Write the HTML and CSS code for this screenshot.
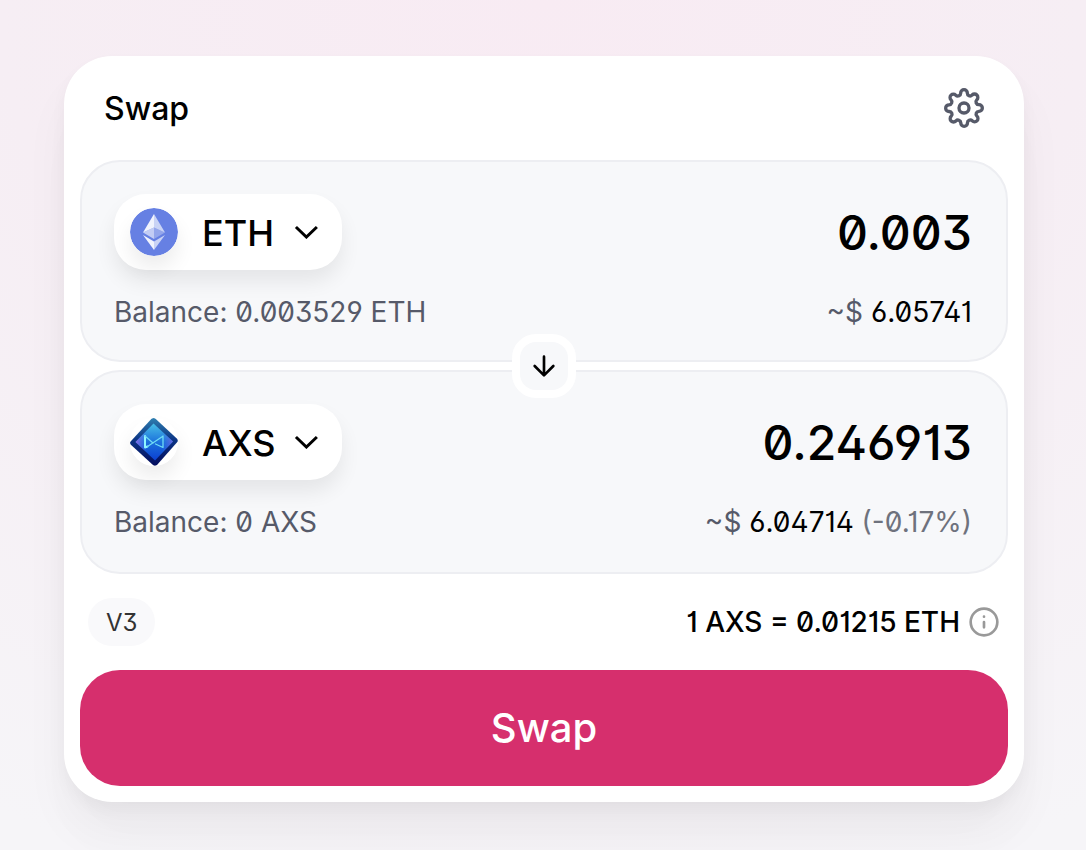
FILE: index.html
```html
<!DOCTYPE html>
<html lang="en">
<head>
    <meta charset="UTF-8">
    <meta name="viewport" content="width=device-width, initial-scale=1.0">
    <title>Swap</title>
    <link rel="stylesheet" href="styles.css">
</head>
<body>
    <main class="swap-card">
        <header class="swap-header">
            <h1 class="swap-title">Swap</h1>
            <button class="settings-button" type="button" aria-label="Transaction settings">
                <svg width="40" height="40" viewBox="0 0 24 24" fill="none" stroke="currentColor" stroke-width="2" stroke-linecap="round" stroke-linejoin="round">
                    <circle cx="12" cy="12" r="3"/>
                    <path d="M19.4 15a1.65 1.65 0 0 0 .33 1.82l.06.06a2 2 0 0 1 0 2.83 2 2 0 0 1-2.83 0l-.06-.06a1.65 1.65 0 0 0-1.82-.33 1.65 1.65 0 0 0-1 1.51V21a2 2 0 0 1-2 2 2 2 0 0 1-2-2v-.09A1.65 1.65 0 0 0 9 19.4a1.65 1.65 0 0 0-1.82.33l-.06.06a2 2 0 0 1-2.83 0 2 2 0 0 1 0-2.83l.06-.06a1.65 1.65 0 0 0 .33-1.82 1.65 1.65 0 0 0-1.51-1H3a2 2 0 0 1-2-2 2 2 0 0 1 2-2h.09A1.65 1.65 0 0 0 4.6 9a1.65 1.65 0 0 0-.33-1.82l-.06-.06a2 2 0 0 1 0-2.83 2 2 0 0 1 2.83 0l.06.06a1.65 1.65 0 0 0 1.82.33H9a1.65 1.65 0 0 0 1-1.51V3a2 2 0 0 1 2-2 2 2 0 0 1 2 2v.09a1.65 1.65 0 0 0 1 1.51 1.65 1.65 0 0 0 1.82-.33l.06-.06a2 2 0 0 1 2.83 0 2 2 0 0 1 0 2.83l-.06.06a1.65 1.65 0 0 0-.33 1.82V9a1.65 1.65 0 0 0 1.51 1H21a2 2 0 0 1 2 2 2 2 0 0 1-2 2h-.09a1.65 1.65 0 0 0-1.51 1z"/>
                </svg>
            </button>
        </header>

        <section class="currency-panel" aria-label="From">
            <div class="currency-row">
                <button class="token-button" type="button">
                    <svg class="token-logo" width="48" height="48" viewBox="0 0 48 48">
                        <circle cx="24" cy="24" r="24" fill="#6680e3"/>
                        <path fill="#fff" fill-opacity=".9" d="M24 6L13 24.5l11-5z"/>
                        <path fill="#fff" fill-opacity=".65" d="M24 6l11 18.5-11-5z"/>
                        <path fill="#fff" fill-opacity=".6" d="M13 24.5l11-5V31z"/>
                        <path fill="#fff" fill-opacity=".3" d="M35 24.5l-11-5V31z"/>
                        <path fill="#fff" fill-opacity=".9" d="M13 27l11 6.500V42z"/>
                        <path fill="#fff" fill-opacity=".65" d="M35 27l-11 6.500V42z"/>
                    </svg>
                    <span class="token-symbol">ETH</span>
                    <svg class="chevron" width="24" height="14" viewBox="0 0 12 7" fill="none" stroke="currentColor" stroke-width="1.5">
                        <path d="M.97 1L6.2 6l5.24-5"/>
                    </svg>
                </button>
                <input class="amount" type="text" inputmode="decimal" aria-label="Amount to sell" value="0.003">
            </div>
            <div class="currency-row currency-details">
                <span class="muted">Balance: 0.003529 ETH</span>
                <span><span class="muted">~$</span> 6.05741</span>
            </div>
        </section>

        <div class="switch-row">
            <button class="switch-button" type="button" aria-label="Switch tokens">
                <svg width="32" height="32" viewBox="0 0 24 24" fill="none" stroke="currentColor" stroke-width="2" stroke-linecap="round" stroke-linejoin="round">
                    <path d="M12 5v14M19 12l-7 7-7-7"/>
                </svg>
            </button>
        </div>

        <section class="currency-panel currency-panel-output" aria-label="To">
            <div class="currency-row">
                <button class="token-button" type="button">
                    <svg class="token-logo" width="48" height="48" viewBox="0 0 48 48">
                        <defs>
                            <linearGradient id="axs-edge" x1="0" y1="0" x2="0" y2="1">
                                <stop offset="0" stop-color="#2f7fb0"/>
                                <stop offset=".45" stop-color="#0c3585"/>
                                <stop offset="1" stop-color="#020b5c"/>
                            </linearGradient>
                            <linearGradient id="axs-face" x1="0" y1="0" x2="0" y2="1">
                                <stop offset="0" stop-color="#48bfe6"/>
                                <stop offset=".5" stop-color="#1c72dc"/>
                                <stop offset="1" stop-color="#0b3fd2"/>
                            </linearGradient>
                            <linearGradient id="axs-glow" x1="0" y1="0" x2="1" y2="0">
                                <stop offset="0" stop-color="#9a6be8" stop-opacity=".9"/>
                                <stop offset=".3" stop-color="#4f6be8" stop-opacity="0"/>
                                <stop offset=".72" stop-color="#4f6be8" stop-opacity="0"/>
                                <stop offset="1" stop-color="#7d62e0" stop-opacity=".8"/>
                            </linearGradient>
                        </defs>
                        <circle cx="24" cy="24" r="24" fill="#fff"/>
                        <path fill="url(#axs-edge)" d="M21.5.8q2-1.6 4 0L47.300 21q1.2 1.500 0 3L27 47q-2 1.600-4 0L.6 26.500q-1.200-1.500 0-3z"/>
                        <path fill="url(#axs-face)" d="M23.5 5.5L43 23.5 25 42.5 5.5 24z"/>
                        <path fill="url(#axs-glow)" d="M23.5 5.5L43 23.5 25 42.5 5.5 24z"/>
                        <g fill="none" stroke-linecap="round" stroke-linejoin="round">
                            <path stroke="#8ff6ff" stroke-width="2" d="M17.500 28.500l-2.500 1V18"/>
                            <path stroke="#6fdcf5" stroke-width="1.300" d="M15 18l8 7M17.500 28.500l15-10M25.500 26l7.500 3.500V18"/>
                        </g>
                    </svg>
                    <span class="token-symbol">AXS</span>
                    <svg class="chevron" width="24" height="14" viewBox="0 0 12 7" fill="none" stroke="currentColor" stroke-width="1.5">
                        <path d="M.97 1L6.2 6l5.24-5"/>
                    </svg>
                </button>
                <input class="amount" type="text" inputmode="decimal" aria-label="Amount to buy" value="0.246913">
            </div>
            <div class="currency-row currency-details">
                <span class="muted">Balance: 0 AXS</span>
                <span><span class="muted">~$</span> 6.04714 <span class="impact">(-0.17%)</span></span>
            </div>
        </section>

        <div class="trade-info">
            <span class="version-badge">V3</span>
            <div class="rate">
                <span>1 AXS = 0.01215 ETH</span>
                <svg class="info-icon" width="32" height="32" viewBox="0 0 24 24" fill="none" stroke="currentColor" stroke-width="2" stroke-linecap="round" stroke-linejoin="round">
                    <circle cx="12" cy="12" r="10"/>
                    <path d="M12 16v-4M12 8h.01"/>
                </svg>
            </div>
        </div>

        <button class="swap-button" type="button">Swap</button>
    </main>
</body>
</html>
```
FILE: styles.css
```css
* {
    box-sizing: border-box;
}
body {
    margin: 0;
    min-height: 100vh;
    padding: 56px 62px 48px 64px;
    font-family: Inter, "Liberation Sans", sans-serif;
    font-size: 28px;
    line-height: 36px;
    font-feature-settings: "zero", "cv01", "cv02", "cv03", "cv04", "cv09";
    color: #000;
    background: radial-gradient(100% 110% at 50% 0, #f8ebf3 0%, #f6eef4 50%, #f6f5f8 100%);
}
button,
input {
    font: inherit;
    font-feature-settings: inherit;
    color: inherit;
    border: none;
    padding: 0;
}
button {
    cursor: pointer;
}
svg {
    display: block;
    flex-shrink: 0;
}
.swap-card {
    padding: 16px;
    background: #fff;
    border-radius: 48px;
    box-shadow: 0 0 2px rgba(0, 0, 0, 0.01), 0 8px 16px rgba(0, 0, 0, 0.04), 0 32px 48px rgba(0, 0, 0, 0.04), 0 48px 64px rgba(0, 0, 0, 0.01);
}
.swap-header {
    display: flex;
    align-items: flex-start;
    justify-content: space-between;
    padding: 16px 24px 30px;
}
.swap-title {
    margin: 0;
    font-size: 32px;
    line-height: 42px;
    font-weight: 500;
}
.settings-button {
    background: none;
    color: #565a69;
}
.currency-panel {
    padding: 32px 34px 30px 32px;
    background: #f7f8fa;
    border: 2px solid #edeef2;
    border-radius: 40px;
}
.currency-panel-output {
    padding-bottom: 32px;
}
.currency-row {
    display: flex;
    align-items: center;
    justify-content: space-between;
}
.currency-details {
    margin-top: 24px;
}
.token-button {
    display: flex;
    align-items: center;
    flex-shrink: 0;
    min-width: 228px;
    height: 76px;
    padding: 0 24px 0 16px;
    background: #fff;
    border-radius: 32px;
    box-shadow: 0 12px 20px rgba(0, 0, 0, 0.075);
}
.token-logo {
    border-radius: 50%;
    box-shadow: 0 12px 20px rgba(0, 0, 0, 0.075);
}
.token-symbol {
    margin: 0 auto 0 24px;
    padding-top: 2px;
    font-size: 36px;
    line-height: 44px;
    font-weight: 500;
}
.amount {
    flex: 1;
    min-width: 0;
    padding-top: 2px;
    background: none;
    font-size: 48px;
    line-height: 58px;
    font-weight: 500;
    text-align: right;
}
.muted {
    color: #565a69;
}
.impact {
    color: #6e727d;
}
/* overlaps both panels, leaving an 8px gap between them */
.switch-row {
    display: flex;
    justify-content: center;
    position: relative;
    margin: -28px 0;
    pointer-events: none;
}
.switch-button {
    display: flex;
    align-items: center;
    justify-content: center;
    width: 64px;
    height: 64px;
    background: #f7f8fa;
    border: 8px solid #fff;
    border-radius: 24px;
    pointer-events: auto;
}
.trade-info {
    display: flex;
    align-items: center;
    justify-content: space-between;
    padding: 24px 8px;
}
.version-badge {
    padding: 9px 18px 7px;
    background: #f9f9fb;
    border-radius: 24px;
    font-size: 24px;
    line-height: 32px;
    color: #333;
}
.rate {
    display: flex;
    align-items: center;
    gap: 8px;
    font-weight: 500;
}
.info-icon {
    color: #999;
}
.swap-button {
    display: block;
    width: 100%;
    padding: 34px;
    background: #d62f6d;
    border-radius: 40px;
    color: #fff;
    font-size: 40px;
    line-height: 48px;
    font-weight: 500;
}
```
